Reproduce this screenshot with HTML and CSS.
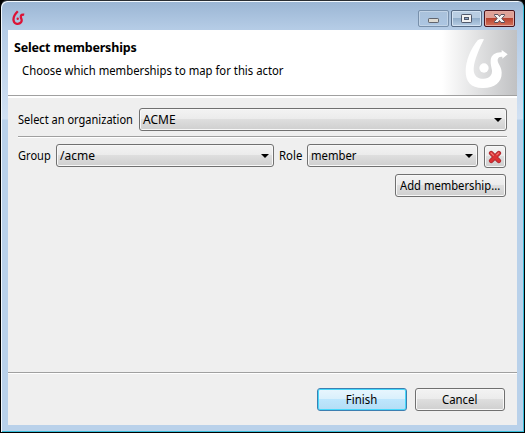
FILE: index.html
```html
<!DOCTYPE html>
<html lang="en">
<head>
<meta charset="utf-8">
<title>Select memberships</title>
<link rel="stylesheet" href="styles.css">
</head>
<body>
<main class="window">
  <header class="titlebar">
    <svg class="app-icon" viewBox="0 0 14 16"><path d="M5.800 1.200C2.5 4.500 .8 8.2 1.800 11.200c.8 3 5.300 3.500 7.200 1.100 1.900-2.300-.5-4-.2-5.800.2-1.600 1.300-2.100 3.400-1.800" fill="none" stroke="#dc1236" stroke-width="2.3"/><circle cx="5.7" cy="8.700" r="1.2" fill="#dc1236"/></svg>
    <div class="controls">
      <button class="control minimize" aria-label="Minimize"><svg viewBox="0 0 31 17"><rect x="10.5" y="8.5" width="10" height="4" rx=".7" fill="#dedbd3" stroke="#60646d"/></svg></button>
      <button class="control maximize" aria-label="Maximize"><svg viewBox="0 0 31 17"><rect x="10.5" y="4.5" width="10" height="8" rx=".7" fill="#f2f2f2" stroke="#50586b"/><rect x="13.5" y="7.5" width="4" height="2" fill="#8ba4c5" stroke="#50586b"/></svg></button>
      <button class="control close" aria-label="Close"><svg viewBox="0 0 31 17"><path d="M10.5 4.500h3.500l1.500 2 1.500-2h3.500v1l-2.700 3 2.700 3v1H17l-1.500-2-1.500 2h-3.500v-1l2.700-3-2.700-3z" fill="#f4f4f4" stroke="#58505c"/></svg></button>
    </div>
  </header>
  <section class="dialog">
    <div class="banner">
      <div class="headings"><h1><span class="label heading">Select memberships</span></h1><p><span class="label desc">Choose which memberships to map for this actor</span></p></div>
      <svg class="logo" viewBox="192 114 135 153"><path d="M233 121Q242 115 252 118C238 145 222 183 221 206C220 228 235 237 251 236C268 236 277 226 276 211C274 200 271 193 272 181C273 164 288 156 305 157V150L323 163L307 176V170C296 169 292 175 293 183C295 193 305 202 305 218C306 247 283 264 250 264C213 265 197 246 197 214C197 181 213 145 233 121Z" fill="#fff"/><circle cx="252" cy="204" r="14" fill="#fff"/></svg>
    </div>
    <div class="body">
      <div class="row organization">
        <span class="label org-label">Select an organization</span>
        <button class="field select"><span class="label">ACME</span><i class="arrow"></i></button>
      </div>
      <div class="separator"></div>
      <div class="row membership">
        <span class="label group-label">Group</span>
        <button class="field select group"><span class="label">/acme</span><i class="arrow"></i></button>
        <span class="label role-label">Role</span>
        <button class="field select role"><span class="label member">member</span><i class="arrow"></i></button>
        <button class="field remove" aria-label="Remove membership"><svg viewBox="0 0 14 14"><path d="M3.200 3.200l7.600 7.600M10.800 3.200l-7.600 7.600" stroke="#a92b32" stroke-width="4.6" stroke-linecap="round"/><path d="M3 3l8 8M11 3l-8 8" stroke="#dc3033" stroke-width="3" stroke-linecap="round"/><path d="M2.700 2.700l3 3M11 2.700L8.500 5.200" stroke="#f07c79" stroke-width="1.200"/></svg></button>
      </div>
      <button class="field add"><span class="label add-label">Add membership...</span></button>
    </div>
    <footer class="actions">
      <button class="field action finish"><span class="label finish-label">Finish</span></button>
      <button class="field action"><span class="label cancel-label">Cancel</span></button>
    </footer>
  </section>
</main>
</body>
</html>
```
FILE: styles.css
```css
* { box-sizing: border-box; }
body { margin: 0; background: #000; font: 12px/16px "Noto Sans", "Open Sans", sans-serif; color: #000; }
button { appearance: none; margin: 0; padding: 0; font: inherit; color: inherit; }
svg { display: block; }
.window {
  width: 525px; height: 433px; padding: 1px 7px 7px; border: 1px solid #000; border-top-color: #292d32;
  border-radius: 7px 7px 0 0;
  box-shadow: inset 1px 1px #f2f8fd, inset -1px -1px #38bdd9;
  background: linear-gradient(#9ab5d3 0, #b5cce6 28px, #d1e1f3 118px, #b9d1ea 119px);
}
.titlebar { height: 28px; display: flex; justify-content: space-between; padding: 8px 2px 0 4px; }
.app-icon { width: 14px; height: 16px; }
.controls { display: flex; gap: 2px; }
.control { width: 31px; height: 17px; border: 1px solid #576b85; border-radius: 2px; background: linear-gradient(#b9cde2 0 48%, #92aeca 50%, #b7cee5); box-shadow: inset 0 0 0 1px #d3e2f2; }
.control svg { width: 31px; height: 17px; margin: -1px; }
.minimize { border-color: #7890ab; background: linear-gradient(#a9c1db, #acc6e2); box-shadow: inset 0 0 0 1px #c2d4e7; }
.close { border-color: #49141e; background: linear-gradient(#dea197 0 46%, #b8422f 50%, #d4745c); box-shadow: inset 0 0 0 1px #e4aaa1; }
.dialog { height: 395px; display: flex; flex-direction: column; background: #efefef; }
.banner { height: 68px; display: flex; justify-content: space-between; padding: 8px 8px 0 6px; border-bottom: 2px solid #fff; background: linear-gradient(#a0a0a0, #a0a0a0) bottom/100% 1px no-repeat, linear-gradient(90deg, #fff 434px, #c0c1c3 509px); }
.headings { padding-top: 2px; }
h1, p { font: inherit; margin: 0; }
p { margin-top: 7px; padding-left: 8px; }
.logo { width: 45px; height: 51px; }
.label { display: inline-block; white-space: nowrap; transform-origin: left center; }
.heading { font-weight: 700; font-size: 12.5px; letter-spacing: -.18px; }
.desc { transform: scaleX(.942); }
.org-label { transform: scaleX(.92); }
.member { transform: scaleX(.94); }
.add-label { transform: scaleX(.935); }
.finish-label, .cancel-label { transform: scaleX(.95); transform-origin: center; }
.body { height: 274px; padding: 10px 10px 0; display: flex; flex-direction: column; }
.row { display: flex; align-items: center; }
.field { border: 1px solid #707070; border-radius: 3px; background: linear-gradient(#f3f3f3, #ebebeb 49%, #dedede 50%, #cfcfcf); box-shadow: inset 0 0 0 1px #f8f8f8; }
.select { flex: none; height: 23px; display: flex; align-items: center; justify-content: space-between; padding: 0 4px 0 3px; }
.organization { height: 23px; }
.org-label { width: 121px; }
.organization .select { width: 368px; }
.arrow { border: 4px solid transparent; border-top-color: #000; border-bottom: 0; width: 8px; height: 4px; }
.separator { height: 2px; margin-top: 5px; background: linear-gradient(#a0a0a0 50%, #fff 50%); }
.membership { height: 24px; margin-top: 6px; align-items: flex-start; }
.group-label, .role-label { margin-top: 4px; }
.group-label { width: 38px; transform: scaleX(.92); }
.role-label { width: 23px; margin-left: 5px; transform: scaleX(.95); }
.group { width: 218px; }
.role { width: 171px; margin-left: 5px; }
.remove { width: 22px; height: 23px; margin: 1px 0 0 6px; padding: 3px; }
.remove svg { width: 14px; height: 14px; }
.add { align-self: flex-end; width: 111px; height: 23px; margin: 6px 1px 0 0; padding-left: 4px; text-align: left; }
.actions { flex: 1; display: flex; justify-content: flex-end; padding: 16px 12px 0; gap: 8px; background: linear-gradient(#a0a0a0 0 1px, #fff 1px 2px, #efefef 2px); }
.action { width: 90px; height: 23px; }
.finish { border-color: #3c7fb1; background: linear-gradient(#e8f6fe, #d9f0fc 49%, #bde6fd 50%, #b4ddf5); box-shadow: inset 0 0 0 1px #46d8fb; }
```
